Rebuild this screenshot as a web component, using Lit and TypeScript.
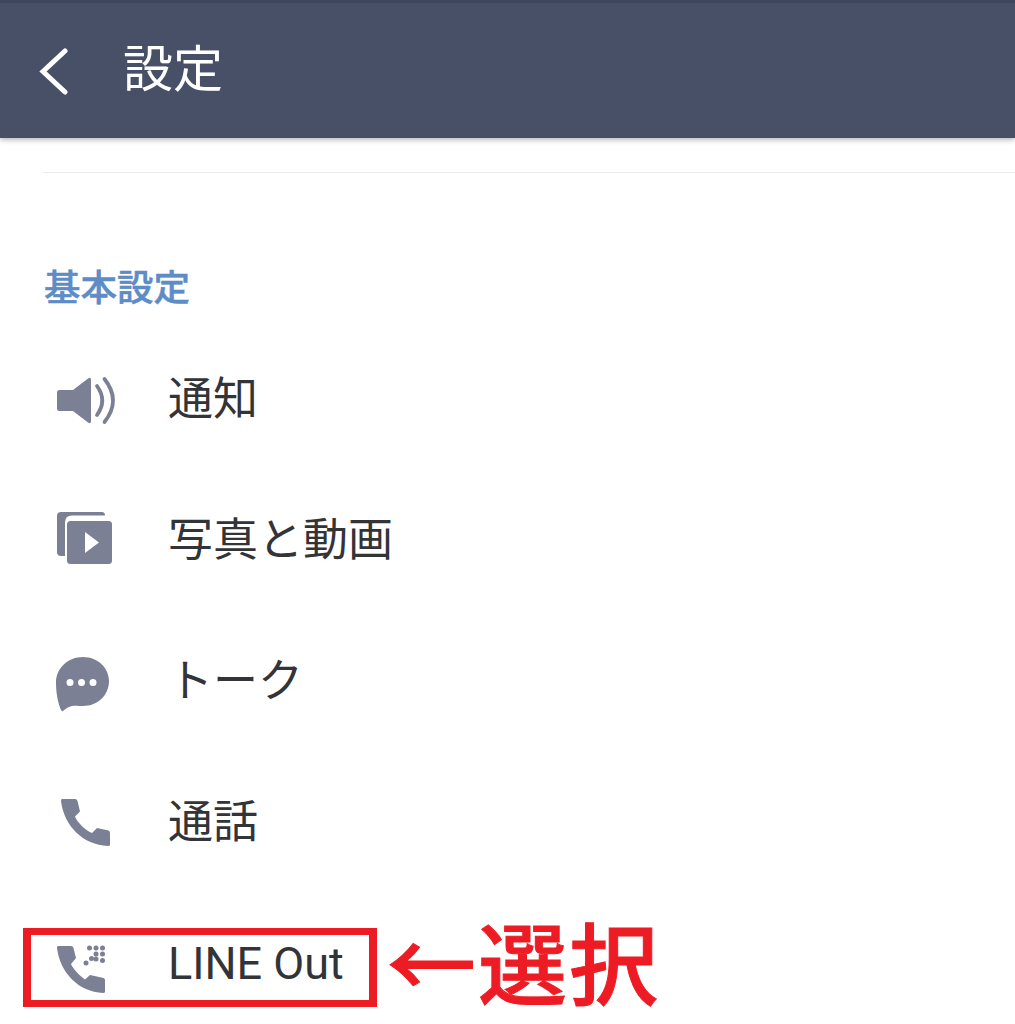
import { LitElement, html, svg, css } from "lit";
import { customElement } from "lit/decorators.js";

const ICON = "#7b8095";

const ICONS = {
  sound: svg`
    <path d="M2 18.500q0-2.500 2.500-2.500H18L33 4.500q3-2 3 1.500v41q0 3.500-3 1.500L18 37H4.500Q2 37 2 34.500z" fill="${ICON}"/>
    <path d="M42 12q10.500 14.500 0 29M49.500 5q17 21.500 0 43" fill="none" stroke="${ICON}" stroke-width="3.800" stroke-linecap="round"/>`,
  media: svg`
    <path d="M6 0h41q3 0 3 3.500H17q-7 0-7 7V44H6q-4 0-4-4V4q0-4 4-4z" fill="${ICON}"/>
    <rect x="12" y="9" width="45" height="43" rx="3.500" fill="${ICON}"/>
    <path d="M30 20l14 10.500L30 41z" fill="#fff"/>`,
  talk: svg`
    <path d="M28 0C43 0 54 11 54 24 54 38 43 49 28 49 22 49 18 48 14 50 11 51.500 9 53 8 54 7 54.500 6.500 54 6 53 3 46 1 36 1 26 1 11 13 0 28 0z" fill="${ICON}"/>
    <circle cx="15" cy="25.500" r="3.500" fill="#fff"/><circle cx="26.500" cy="25.500" r="3.500" fill="#fff"/><circle cx="38" cy="25.500" r="3.500" fill="#fff"/>`,
  call: svg`
    <path d="M1 1H14Q16 1 16.500 3L19 13.500 14 18.500C16 24 24 32 31 35L36 30 47.500 32.500Q49 33 49 35V47Q49 48 47 48C22 47 3 28 0 3Q0 1 1 1z" fill="${ICON}"/>`,
  lineOut: svg`
    <path d="M1 1H14Q16 1 16.500 3L19 13 14 19C16 24 23 31 28 34.500L33 30 46.500 33Q48 33.500 48 35V47Q48 48 46 48C22 47 3 28 0 3Q0 1 1 1z" fill="${ICON}"/>
    ${[
      [32.500, 3], [39, 3], [45.500, 3], [39, 9], [45.500, 9],
      [39, 14], [45.500, 15.500], [34.500, 13.500], [29, 18],
    ].map(([cx, cy]) => svg`<circle cx="${cx}" cy="${cy}" r="2.500" fill="${ICON}"/>`)}`,
};

const ROWS = [
  { label: "通知", icon: ICONS.sound, w: 60, h: 52, view: "0 -1 60 52" },
  { label: "写真と動画", icon: ICONS.media, w: 58, h: 52, view: "0 2 58 52" },
  { label: "トーク", icon: ICONS.talk, w: 56, h: 55, view: "0 -4 56 55" },
  { label: "通話", icon: ICONS.call, w: 55, h: 48, view: "-6 0 55 48" },
];

@customElement("app-root")
export class AppRoot extends LitElement {
  static styles = css`
    :host {
      display: block;
      height: 1024px;
      overflow: hidden;
      position: relative;
      background: #fff;
      font-family: "Roboto", "Noto Sans CJK JP", sans-serif;
      color: #333438;
    }
    .header {
      box-sizing: border-box;
      height: 138px;
      display: flex;
      align-items: center;
      gap: 54px;
      padding: 0 0 0 39px;
      background: #485068;
      border-top: 3px solid #3e465b;
      box-shadow: 0 2px 5px rgba(0, 0, 0, 0.28);
      color: #fff;
      font-size: 50px;
    }
    .header svg {
      display: block;
      flex: none;
    }
    .header span {
      line-height: 1;
      position: relative;
      top: -1px;
    }
    .rule {
      height: 1px;
      margin: 34px 0 0 43px;
      background: #ececee;
    }
    .section {
      margin: 97px 0 0 44px;
      height: 38px;
      line-height: 38px;
      font-size: 36.5px;
      font-weight: 500;
      -webkit-text-stroke: 0.5px #5e8cc6;
      color: #5e8cc6;
    }
    .list {
      margin-top: 20px;
    }
    .row {
      height: 141px;
      display: flex;
      align-items: center;
    }
    .slot {
      width: 168px;
      padding-left: 55px;
      box-sizing: border-box;
      flex: none;
    }
    .slot svg {
      display: block;
      overflow: visible;
    }
    .label {
      font-size: 45px;
      line-height: 1;
      position: relative;
      top: 1px;
    }
    .outline {
      position: absolute;
      left: 23px;
      top: 928px;
      width: 354px;
      height: 79px;
      box-sizing: border-box;
      border-style: solid;
      border-color: #ed1c24;
      border-width: 7px 8px;
    }
    .callout {
      position: absolute;
      left: 387px;
      top: 918px;
      font-size: 89px;
      line-height: 100px;
      font-weight: 500;
      letter-spacing: 2px;
      -webkit-text-stroke: 1px #ed1c24;
      color: #ed1c24;
      white-space: nowrap;
    }
  `;

  render() {
    return html`
      <div class="header">
        <svg width="30" height="48" viewBox="0 0 30 48">
          <path d="M26 4 4 24.500 26 45" fill="none" stroke="#fff" stroke-width="5" stroke-linecap="round"/>
        </svg>
        <span>設定</span>
      </div>
      <div class="rule"></div>
      <div class="section">基本設定</div>
      <div class="list">
        ${ROWS.map(
          r => html`
            <div class="row">
              <div class="slot">
                <svg width="${r.w}" height="${r.h}" viewBox="${r.view}">${r.icon}</svg>
              </div>
              <div class="label">${r.label}</div>
            </div>
          `
        )}
        <div class="row">
          <div class="slot">
            <svg width="50" height="48" viewBox="-2 -6 50 48">${ICONS.lineOut}</svg>
          </div>
          <div class="label">LINE Out</div>
        </div>
      </div>
      <div class="outline"></div>
      <div class="callout">←選択</div>
    `;
  }
}
